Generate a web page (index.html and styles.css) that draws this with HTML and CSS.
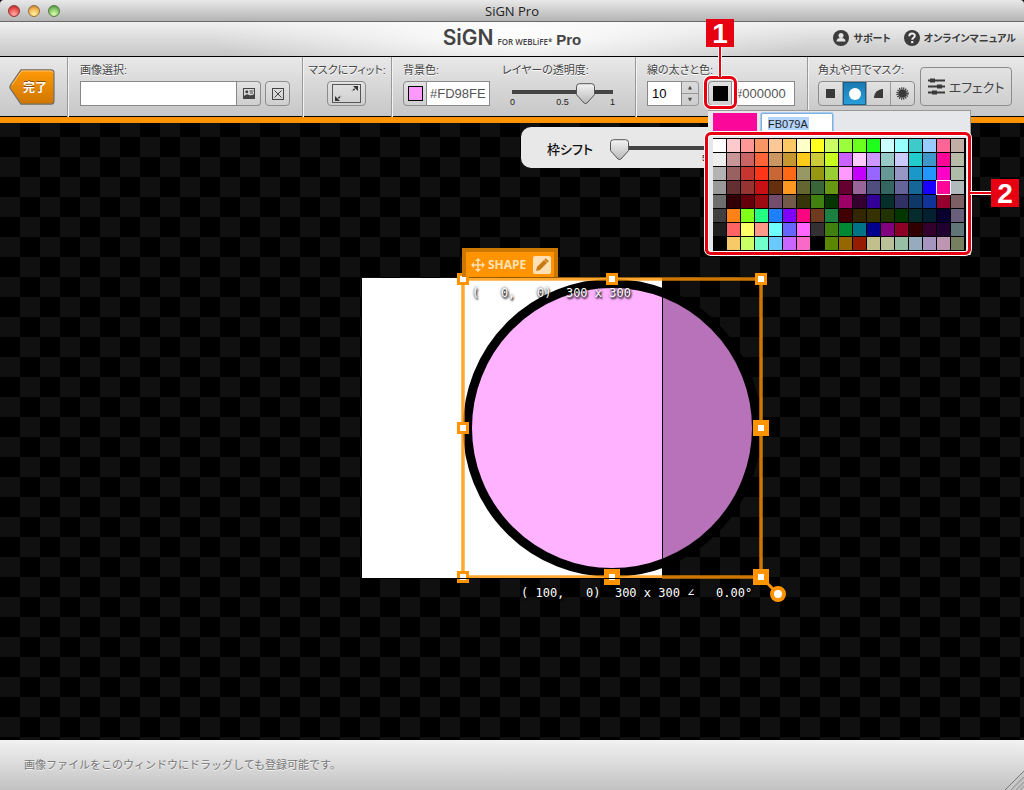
FILE: index.html
```html
<!DOCTYPE html>
<html lang="ja">
<head>
<meta charset="utf-8">
<title>SiGN Pro</title>
<link rel="stylesheet" href="styles.css">
</head>
<body>
<div class="titlebar">
  <div class="lights">
    <button class="light red" aria-label="閉じる"></button>
    <button class="light yellow" aria-label="しまう"></button>
    <button class="light green" aria-label="拡大"></button>
  </div>
  <span class="title">SiGN Pro</span>
</div>

<header class="brandbar">
  <div class="logo"><span class="logo-main">SiGN</span><span class="logo-sub">FOR WEBLiFE*</span><span class="logo-pro">Pro</span></div>
  <nav class="help">
    <a href="#support">
      <svg width="16" height="16" viewBox="0 0 16 16"><circle cx="8" cy="8" r="8" fill="#3c3c3c"/><circle cx="8" cy="5.6" r="2.5" fill="#e4e4e4"/><path d="M3.6 11.6c0-3 2-3.6 4.400-3.600s4.400.6 4.400 3.600z" fill="#e4e4e4"/></svg>
      <span>サポート</span>
    </a>
    <a href="#manual">
      <svg width="16" height="16" viewBox="0 0 16 16"><circle cx="8" cy="8" r="8" fill="#3c3c3c"/><path d="M5.300 6.200c0-3.600 5.500-3.600 5.500-.4 0 2-2.600 1.900-2.600 4" fill="none" stroke="#eee" stroke-width="2"/><rect x="7.100" y="11" width="2.200" height="2.200" fill="#eee"/></svg>
      <span>オンラインマニュアル</span>
    </a>
  </nav>
</header>

<div class="toolbar">
  <div class="section done-section">
    <button class="done">
      <svg width="46" height="36" viewBox="0 0 46 36"><defs><linearGradient id="dg" x2="0" y2="1"><stop offset="0" stop-color="#ff9a08"/><stop offset="1" stop-color="#cf7600"/></linearGradient></defs><path d="M12 .8h30q3 0 3 3v28.400q0 3-3 3H12L1.500 20q-1.200-2 0-4z" fill="url(#dg)" stroke="#6f6f6f" stroke-width="1.200"/><path d="M3 16L12.800 2H42q2 0 2 2" fill="none" stroke="#ffc068"/></svg>
      <span>完了</span>
    </button>
  </div>

  <div class="section image-section">
    <div class="field">
      <label for="image">画像選択:</label>
      <div class="row">
        <input id="image" class="box image-input" type="text">
        <button class="btn joined" aria-label="画像"><svg width="12" height="12" viewBox="0 0 12 12"><rect x=".5" y=".5" width="11" height="10" fill="none" stroke="#444"/><circle cx="3.800" cy="3.800" r="1.500" fill="#444"/><path d="M6.500 3h4M7 5h3" stroke="#444"/><path d="M1 8q3-3 5-1 3 1 5-1v5H1z" fill="#444"/></svg></button>
        <button class="btn clear" aria-label="消去"><svg width="12" height="12" viewBox="0 0 12 12" fill="none" stroke="#444"><rect x=".5" y=".5" width="11" height="11"/><path d="M2.500 2.500l7 7M9.500 2.500l-7 7"/></svg></button>
      </div>
    </div>
  </div>

  <div class="section fit-section">
    <div class="field">
      <span class="label">マスクにフィット:</span>
      <button class="btn fit" aria-label="フィット"><svg width="29" height="19" viewBox="0 0 29 19"><rect x=".5" y=".5" width="28" height="18" fill="none" stroke="#555"/><path d="M3 12v5h5zM26 7V2h-5z" fill="#333"/><path d="M4 16l5-4M25 3l-5 4" stroke="#333" stroke-width="1.500" stroke-dasharray="2 1"/></svg></button>
    </div>
  </div>

  <div class="section layer-section">
    <div class="field">
      <label for="bg">背景色:</label>
      <div class="row">
        <button class="btn swatch" aria-label="背景色を選択"><span class="chip pink"></span></button>
        <input id="bg" class="box hex" type="text" value="#FD98FE">
      </div>
    </div>
    <div class="field">
      <label for="alpha">レイヤーの透明度:</label>
      <div class="slider">
        <input id="alpha" type="range" min="0" max="1" step="0.01" value="0.73">
        <div class="ticks"><span>0</span><span>0.5</span><span>1</span></div>
      </div>
    </div>
  </div>

  <div class="section line-section">
    <div class="field">
      <label for="linew">線の太さと色:</label>
      <div class="row">
        <input id="linew" class="box num" type="text" value="10">
        <span class="stepper"><button aria-label="増やす">▲</button><button aria-label="減らす">▼</button></span>
        <div class="line-color">
          <button class="btn swatch" aria-label="線の色を選択"><span class="chip black"></span></button>
          <input class="box hex" type="text" value="#000000" aria-label="線の色">
          <div class="picker">
            <div class="picker-head"><span class="preview"></span><input type="text" value="FB079A" aria-label="カラーコード" id="code"></div>
            <div class="palette" id="palette"></div>
            <div class="frame"></div>
            <div class="lead"></div>
            <div class="badge two">2</div>
          </div>
          <div class="ring"></div>
          <div class="stem"></div>
          <div class="badge one">1</div>
        </div>
      </div>
    </div>
  </div>

  <div class="section mask-section">
    <div class="field">
      <span class="label">角丸や円でマスク:</span>
      <div class="group">
        <button aria-label="四角"><svg width="9" height="9"><rect width="9" height="9" fill="#3a3a3a"/></svg></button>
        <button class="on" aria-label="円"><svg width="12" height="12"><circle cx="6" cy="6" r="6" fill="#fff"/></svg></button>
        <button aria-label="角丸"><svg width="9" height="9"><path d="M0 9V8Q1 1 8 0H9V9z" fill="#3a3a3a"/></svg></button>
        <button aria-label="ギザギザ"><svg width="13" height="13" viewBox="0 0 13 13"><circle cx="6.500" cy="6.500" r="4.300" fill="#3a3a3a"/><circle cx="6.500" cy="6.500" r="5.200" fill="none" stroke="#3a3a3a" stroke-width="2" stroke-dasharray="1.150 .9"/></svg></button>
      </div>
    </div>
    <button class="btn effect"><svg width="17" height="17" viewBox="0 0 17 17"><path d="M0 2.500h17M0 8.500h17M0 14.500h17" stroke="#3a3a3a" stroke-width="2"/><path d="M2 2.500h5M9 8.500h5M4 14.500h5" stroke="#3a3a3a" stroke-width="4"/></svg><span>エフェクト</span></button>
  </div>
</div>

<main class="stage">
  <div class="shift-panel">
    <label for="shift">枠シフト</label>
    <div class="slider">
      <input id="shift" type="range" min="0" max="10" value="0">
      <div class="ticks"><span></span><span>5</span></div>
    </div>
  </div>

  <div class="artboard">
    <svg class="drawing" width="430" height="330" viewBox="0 0 430 330">
      <defs><clipPath id="inside"><rect width="300" height="300"/></clipPath></defs>
      <rect width="300" height="300" fill="#fff"/>
      <path d="M-.5 0v300" stroke="#000"/>
      <circle cx="250" cy="150" r="142" fill="#c077c2" fill-opacity=".96"/>
      <circle cx="250" cy="150" r="142" fill="#ffb2ff" clip-path="url(#inside)"/>
      <circle cx="250" cy="150" r="144.500" fill="none" stroke="#000" stroke-width="9"/>
      <path d="M300.500 0v300" stroke="#000"/>
      <g fill="none" stroke="#ff9400">
        <rect x="101" y="1" width="298" height="298" stroke-opacity=".6" stroke-width="4"/>
        <rect x="101" y="1" width="298" height="298" stroke-opacity=".5" stroke-width="2"/>
      </g>
      <path d="M399 299l17 17" stroke="#ff9400" stroke-width="3"/>
      <g fill="#fff" stroke="#ff9400" stroke-width="3">
        <rect x="96.500" y="-3.500" width="9" height="9"/><rect x="245.500" y="-3.500" width="9" height="9"/><rect x="394.500" y="-3.500" width="9" height="9"/>
        <rect x="96.500" y="145.500" width="9" height="9"/><rect x="96.500" y="294.500" width="9" height="9"/>
      </g>
      <g fill="#fff" stroke="#ff9400" stroke-width="5">
        <rect x="393.500" y="144.500" width="11" height="11"/><rect x="244.500" y="293.500" width="11" height="11"/><rect x="393.500" y="293.500" width="11" height="11"/>
      </g>
      <path d="M0 300.500h300" stroke="#000"/>
      <circle cx="416" cy="316" r="6" fill="#fff" stroke="#ff9400" stroke-width="4"/>
    </svg>
    <div class="tag">
      <svg width="14" height="14" viewBox="0 0 14 14"><path d="M7 2v10M2 7h10" stroke="#ffe0b4" stroke-width="1.500"/><path d="M7 0l3 3H4zM7 14l3-3H4zM0 7l3-3v6zM14 7l-3-3v6z" fill="#ffe0b4"/></svg>
      <span>SHAPE</span>
      <button aria-label="編集"><svg width="14" height="14" viewBox="0 0 14 14"><path d="M1 13l1-4L9 2l3 3-7 7z" fill="#c87a10"/><path d="M10 1l3 3" stroke="#c87a10" stroke-width="2"/></svg></button>
    </div>
    <div class="readout inner">(   0,   0)  300 x 300</div>
    <div class="readout outer">( 100,   0)  300 x 300 ∠   0.00°</div>
  </div>
</main>

<footer class="status">
  <span>画像ファイルをこのウィンドウにドラッグしても登録可能です。</span>
  <svg class="grip" width="20" height="20" viewBox="0 0 20 20"><path d="M2 20L20 2v18z" fill="#c8c8c8"/><path d="M1 20L20 1" stroke="#777"/><path d="M7 20L20 7M12 20l8-8M16 20l4-4" stroke="#a2a2a2" stroke-width="1.500"/></svg>
</footer>
<script src="palette.js"></script>
</body>
</html>
```
FILE: styles.css
```css
* { box-sizing: border-box; }
body {
  margin: 0;
  height: 100vh;
  display: flex;
  flex-direction: column;
  background: #000;
  color: #444;
  font: 11px/14px "Liberation Sans", "Noto Sans CJK JP", sans-serif;
  overflow: hidden;
}
button { font: inherit; color: inherit; padding: 0; margin: 0; border: 0; background: none; }
svg { display: block; flex: none; }

.titlebar {
  flex: none;
  height: 22px;
  position: relative;
  display: flex;
  align-items: center;
  justify-content: center;
  background: linear-gradient(#e9e9e9, #b4b4b4);
  border-bottom: 1px solid #686868;
  border-radius: 4px 4px 0 0;
}
.lights { position: absolute; left: 8px; top: 5px; display: flex; gap: 8px; }
.light { width: 12px; height: 12px; border-radius: 50%; border: 1px solid #777; }
.red { background: radial-gradient(circle at 50% 80%, #ffb0a8, #ea4b48 60%, #a02020); border-color: #8c3a38; }
.yellow { background: radial-gradient(circle at 50% 80%, #fff3a0, #f0b050 60%, #a06a20); border-color: #96703a; }
.green { background: radial-gradient(circle at 50% 80%, #dcffb0, #7fc060 60%, #3f7a30); border-color: #547c46; }
.title { font: 13px/20px "Open Sans", sans-serif; color: #222; }

.brandbar {
  flex: none;
  height: 35px;
  display: flex;
  align-items: center;
  justify-content: center;
  position: relative;
  background: radial-gradient(ellipse 300px 60px at 50% 40%, #fff, rgba(255,255,255,0)), linear-gradient(#f0f0f0, #c6c6c6);
  border-bottom: 1px solid #000;
}
.logo { display: flex; align-items: baseline; gap: 4px; color: #444; line-height: 36px; font-family: Inter, sans-serif; font-weight: 600; }
.logo-main { font-size: 21px; }
.logo-sub { font: 600 8px "Open Sans", sans-serif; }
.logo-pro { font-family: "Liberation Sans", sans-serif; font-size: 15px; }
.help { position: absolute; right: 8px; top: 8px; display: flex; gap: 13px; }
.help a {
  display: flex;
  align-items: center;
  gap: 4px;
  color: #3c3c3c;
  font: bold 10px/16px "Noto Sans CJK JP", sans-serif;
  font-feature-settings: "palt";
  text-decoration: none;
}

.toolbar {
  flex: none;
  height: 66px;
  display: flex;
  position: relative;
  z-index: 2;
  background: linear-gradient(#e8e8e8, #c6c6c6);
  background-size: 100% 60px;
  border-bottom: 6px solid #ff9400;
  box-shadow: inset 0 -1px #000;
}
.section {
  display: flex;
  gap: 12px;
  padding: 6px 12px 0;
  border-left: 1px solid #999;
  box-shadow: inset 1px 0 #f2f2f2;
}
.done-section { width: 67px; padding: 12px 0 0 9px; border: 0; box-shadow: none; }
.image-section { width: 235px; }
.fit-section { width: 89px; padding: 6px 5px 0; }
.layer-section { width: 244px; padding-left: 11px; }
.line-section { width: 172px; padding-left: 11px; }
.mask-section { flex: 1; gap: 5px; padding-left: 10px; }
.field { display: flex; flex-direction: column; gap: 4px; }
.field label, .label { white-space: nowrap; text-shadow: 0 1px #fff; font-feature-settings: "palt"; }
.row { display: flex; }

.done { position: relative; height: 36px; }
.done span {
  position: absolute;
  inset: 0 0 0 6px;
  color: #fff;
  font: bold 12px/36px "Noto Sans CJK JP", sans-serif;
  text-align: center;
  text-shadow: 0 -1px #8a5000;
}
.box {
  height: 25px;
  padding: 0 4px;
  border: 1px solid #888;
  border-radius: 0;
  background: #fff;
  color: #555;
  font: 13px "Liberation Sans", sans-serif;
  outline: 0;
}
.image-input { width: 157px; }
.hex { width: 63px; padding: 0 3px; border-left: 0; }
.num { width: 35px; color: #000; }
.btn {
  height: 25px;
  display: flex;
  align-items: center;
  justify-content: center;
  border: 1px solid #8c8c8c;
  border-radius: 4px;
  background: linear-gradient(#e2e2e2, #cfcfcf);
}
.joined { width: 24px; border-left: 0; border-radius: 0 4px 4px 0; }
.clear { width: 25px; margin-left: 4px; }
.fit { width: 39px; align-self: center; }
.swatch { width: 24px; border-radius: 4px 0 0 4px; }
.chip { width: 15px; height: 15px; border: 1px solid #000; }
.pink { background: #fd98fe; }
.black { background: #000; }

.slider { width: 119px; padding-top: 3px; margin-left: 1px; }
.slider input {
  display: block;
  appearance: none;
  width: 100%;
  height: 21px;
  margin: 0;
  background: linear-gradient(#444, #444) center 7px / calc(100% - 18px) 4px no-repeat;
}
.slider input::-webkit-slider-thumb {
  appearance: none;
  width: 19px;
  height: 21px;
  border: 0;
  background: url("data:image/svg+xml,%3Csvg xmlns='http://www.w3.org/2000/svg' width='19' height='21'%3E%3Cdefs%3E%3ClinearGradient id='a' x2='0' y2='1'%3E%3Cstop stop-color='%23f4f4f4'/%3E%3Cstop offset='1' stop-color='%23b8b8b8'/%3E%3C/linearGradient%3E%3C/defs%3E%3Cpath d='M3.500 .7h12q3 0 3 3v8l-7.500 8.300q-1.500 1-3 0L.5 11.700v-8q0-3 3-3z' fill='url(%23a)' stroke='%23555'/%3E%3C/svg%3E") no-repeat;
}
.ticks {
  display: flex;
  justify-content: space-between;
  margin: -7px 7px 0;
  color: #222;
  font-size: 9px;
  line-height: 10px;
}
.layer-section .slider { margin-top: -1px; }

.stepper {
  width: 17px;
  height: 25px;
  display: grid;
  grid-template-rows: 1fr 1fr;
  border: 1px solid #999;
  border-left: 0;
  border-radius: 0 4px 4px 0;
  font: 5px/11px "DejaVu Sans", sans-serif;
}
.stepper button + button { border-top: 1px solid #999; }

.line-color { position: relative; display: flex; margin-left: 9px; }
.badge {
  position: absolute;
  width: 28px;
  height: 28px;
  background: #e60012;
  color: #fff;
  font: bold 28px/29px "Liberation Sans", sans-serif;
  text-align: center;
}
.one { left: -2px; top: -62px; }
.stem { position: absolute; left: 10px; top: -34px; width: 4px; height: 30px; background: #e60012; border: solid #fff; border-width: 0 1px; }
.ring {
  position: absolute;
  left: -4px;
  top: -5px;
  width: 33px;
  height: 33px;
  border: 3px solid #e60012;
  border-radius: 7px;
  box-shadow: inset 0 0 0 1px #fff, 0 0 0 1px #fff;
}
.picker {
  position: absolute;
  left: 0;
  top: 29px;
  width: 263px;
  padding: 2px 4px 4px 5px;
  background: #e6e7ea;
  border-top: 1px solid #999;
  border-right: 1px solid #999;
}
.picker-head { display: flex; align-items: start; gap: 4px; height: 25px; }
.preview { width: 44px; height: 18px; background: #fb079a; }
.picker-head input {
  width: 72px;
  height: 21px;
  padding: 0 6px;
  border: 1px solid #7fb0e0;
  border-radius: 2px;
  background: linear-gradient(#b3d4fd, #b3d4fd) 6px 3px / 41px 13px no-repeat #fff;
  box-shadow: 0 0 0 1px #a9cbee;
  color: #222;
  font: 11px "Liberation Sans", sans-serif;
  outline: 0;
}
.palette {
  display: grid;
  grid-template-columns: repeat(18, 13px);
  gap: 1px;
  width: 253px;
  padding: 1px 1px 1px 0;
  background: #000;
}
.palette button { height: 13px; }
.palette .selected { outline: 1px solid #fff; }
.frame {
  position: absolute;
  left: -3px;
  top: 21px;
  right: -1px;
  bottom: 0;
  border: 3px solid #e60012;
  border-radius: 6px;
  box-shadow: inset 0 0 0 1px #fff, 0 0 0 1px #fff;
}
.lead { position: absolute; left: 262px; top: 80px; width: 22px; height: 4px; background: #e60012; border: solid #fff; border-width: 1px 0; }
.two { left: 283px; top: 68px; }

.group { display: flex; width: 97px; height: 25px; border: 1px solid #8c8c8c; border-radius: 4px; background: linear-gradient(#e2e2e2, #cfcfcf); }
.group button { flex: 1; display: flex; align-items: center; justify-content: center; border-left: 1px solid #999; }
.group button:first-child { border: 0; }
.group .on { background: linear-gradient(#1a78b0, #2aa0dc); box-shadow: inset 0 0 0 1px #14608f; }
.effect {
  width: 92px;
  height: 39px;
  gap: 4px;
  margin-top: 4px;
  font: 13px "Noto Sans CJK JP", sans-serif;
  font-feature-settings: "palt";
}

.stage {
  flex: 1;
  position: relative;
  overflow: hidden;
  background: conic-gradient(#000 25%, #101010 0 50%, #000 0 75%, #101010 0) 0 -6px / 40px 40px;
}
.shift-panel {
  position: absolute;
  left: 521px;
  top: 4px;
  height: 41px;
  display: flex;
  gap: 16px;
  padding: 8px 100px 0 26px;
  border-radius: 10px;
  background: #e8e8e8;
}
.shift-panel label { color: #111; font: 500 13px/28px "Noto Sans CJK JP", sans-serif; font-feature-settings: "palt"; }
.shift-panel .slider { width: 104px; padding-top: 4px; }
.artboard { position: absolute; left: calc(50% - 150px); top: 155px; width: 300px; height: 300px; }
.drawing { overflow: visible; }
.tag {
  position: absolute;
  left: 100px;
  top: -30px;
  width: 96px;
  height: 29px;
  display: flex;
  align-items: center;
  gap: 3px;
  padding-left: 5px;
  border: 4px solid #cc7700;
  border-bottom: 0;
  background: #ff9400;
  color: #ffe0b4;
  font: bold 12px/20px "Open Sans", sans-serif;
}
.tag button { margin-left: 4px; padding: 2px; border-radius: 2px; background: #ffe0b4; }
.readout {
  position: absolute;
  white-space: pre;
  color: #fff;
  font: 12px/14px "DejaVu Sans Mono", monospace;
  text-shadow: 1px 2px 2px #000, 0 0 3px #000;
}
.inner { left: 110px; top: 8px; }
.outer { left: 159px; top: 308px; }

.status {
  flex: none;
  height: 50px;
  position: relative;
  display: flex;
  align-items: center;
  padding: 0 24px;
  background: linear-gradient(#f2f2f2, #c2c2c2);
  color: #777;
  text-shadow: 0 1px #f4f4f4;
}
.grip { position: absolute; right: 0; bottom: 0; }
```
FILE: palette.js
```javascript
const rows = [
  "ffffff fcc9cc ff9797 f89764 fdc897 fbc865 fdffcb ffff1f cbff65 99ff3c 6aff1c 1eff1c cbffff 98ffff 3ecaca 98cbff fe6496 c1aea7",
  "eeeeee c89696 c96364 ff6439 ca9763 c69730 ffcb1a cccc39 c8ff1c cb62ff ffcafd cc98ff 98cbc8 cacaff 22cccd 3d97c9 ff0699 b9bba9",
  "b3b3b3 986263 c63530 ff3517 c86635 ff6814 989864 969812 98cd36 ff98ff c600ff 9765ff 669896 9797c6 1b97c8 2197ff ff00c8 afbca9",
  "999999 642f30 973330 c91014 66300f ff9820 646631 386638 669812 660030 996499 504d7f 336661 646498 176698 1a00ff ff0699 b0b9bc",
  "6e6e6e 310007 65000a 9b0b10 744d6c 735a48 363509 3f800e 053500 9a0066 330030 320098 062f2c 303063 0f3866 0f3398 96002f 7c5e65",
  "404040 ff8219 80ff19 23ff83 1e80ff 8000ff ff0480 6f3a20 1b8040 400000 332600 353200 203300 003700 042c2c 02202f 0a0030 6a5e7d",
  "1e1e1e ff6363 ffff66 ff9888 6fffff 6666ff ff66ff 332f33 40800f 008833 007386 00008c 800080 8b0024 300000 33002e 20002f 5f7578",
  "000000 f8ca67 cbff66 71ffcc 6acaff c866ff f969c8 000000 5a8600 966600 951c00 c1bf8c b8c198 98bfa6 96abbe a695c1 be96b1 768060"
];
const palette = document.getElementById("palette");
rows.forEach((row, y) => row.split(" ").forEach((hex, x) => {
  const cell = document.createElement("button");
  cell.style.background = "#" + hex;
  cell.setAttribute("aria-label", "#" + hex);
  if (y === 3 && x === 16) cell.className = "selected";
  palette.append(cell);
}));
```
